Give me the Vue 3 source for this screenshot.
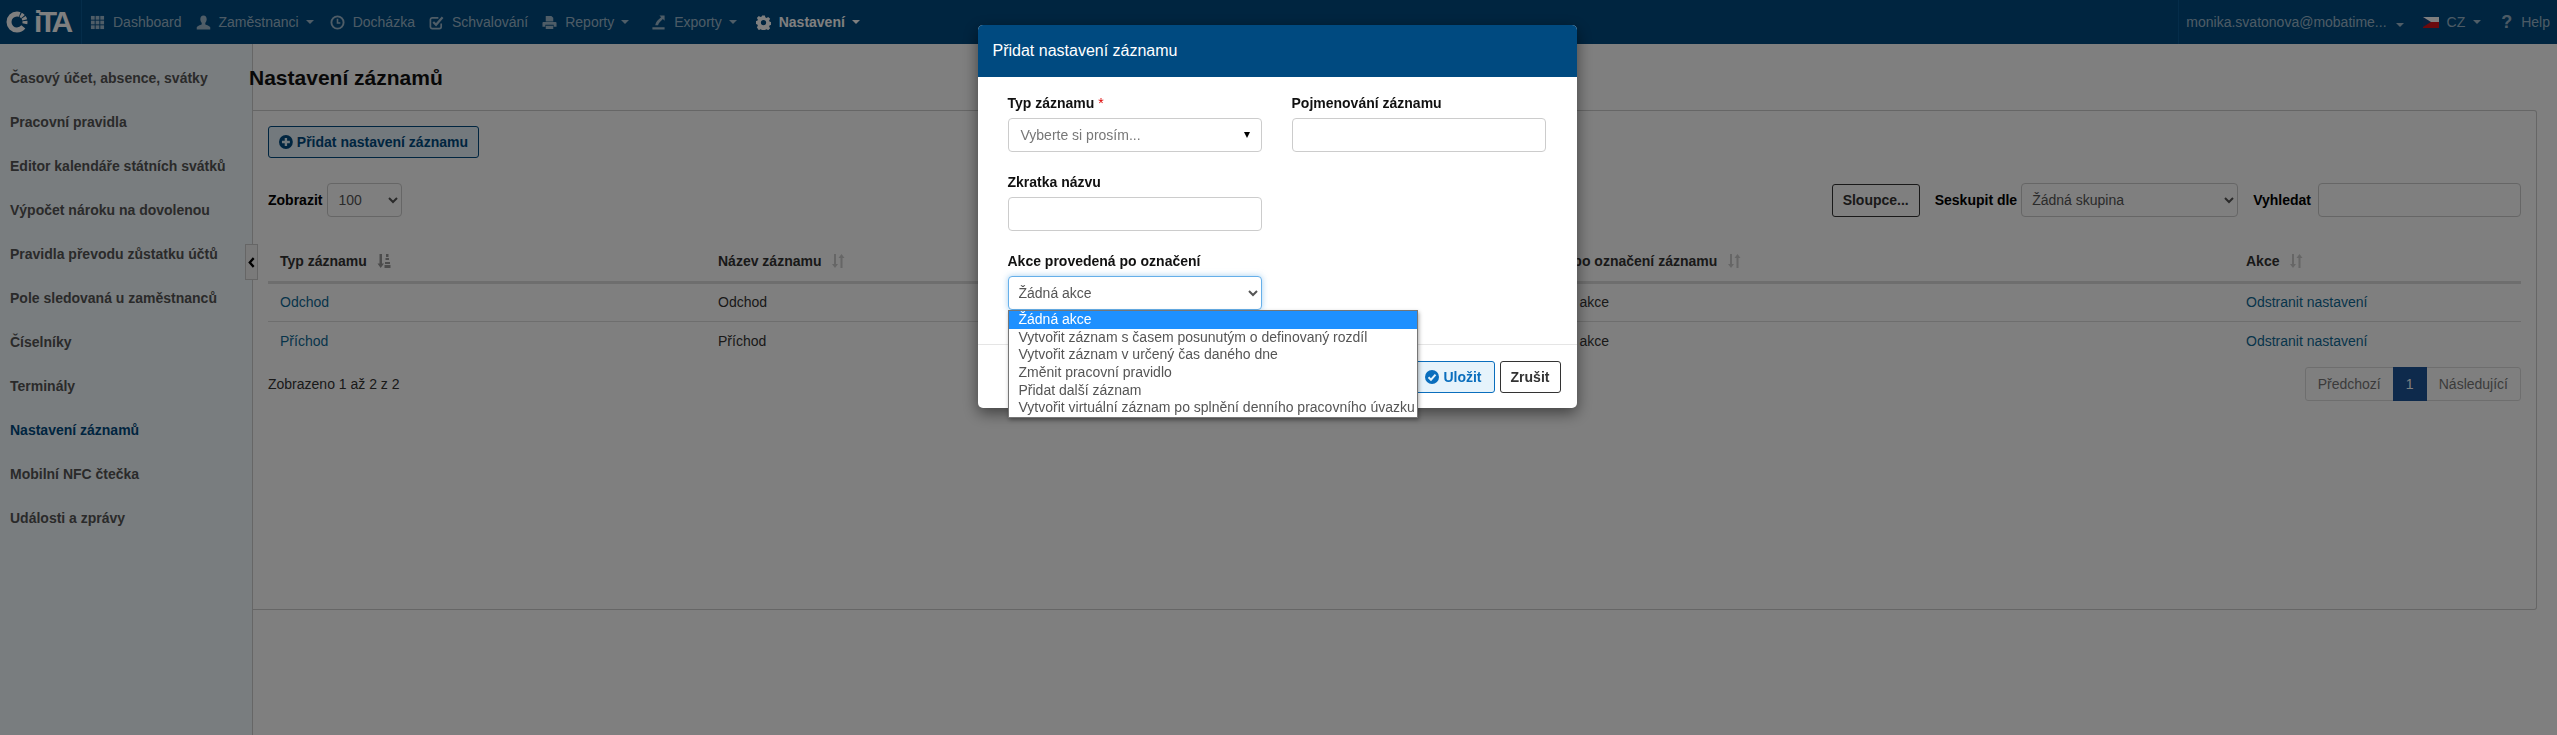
<script setup>
const sideItems = [
  'Časový účet, absence, svátky',
  'Pracovní pravidla',
  'Editor kalendáře státních svátků',
  'Výpočet nároku na dovolenou',
  'Pravidla převodu zůstatku účtů',
  'Pole sledovaná u zaměstnanců',
  'Číselníky',
  'Terminály',
  'Nastavení záznamů',
  'Mobilní NFC čtečka',
  'Události a zprávy'
]

const navItems = [
  { label: 'Dashboard', icon: 'th' },
  { label: 'Zaměstnanci', icon: 'user', caret: true },
  { label: 'Docházka', icon: 'clock' },
  { label: 'Schvalování', icon: 'check' },
  { label: 'Reporty', icon: 'print', caret: true },
  { label: 'Exporty', icon: 'export', caret: true },
  { label: 'Nastavení', icon: 'gear', caret: true, active: true }
]

// třetí sloupec je celý schovaný pod dialogem
const columns = ['Typ záznamu', 'Název záznamu', '', 'Akce po označení záznamu', 'Akce']
const rows = [
  { type: 'Odchod', name: 'Odchod' },
  { type: 'Příchod', name: 'Příchod' }
]

const actions = [
  'Žádná akce',
  'Vytvořit záznam s časem posunutým o definovaný rozdíl',
  'Vytvořit záznam v určený čas daného dne',
  'Změnit pracovní pravidlo',
  'Přidat další záznam',
  'Vytvořit virtuální záznam po splnění denního pracovního úvazku'
]
</script>

<template>
  <div class="page">
    <header class="navbar">
      <div class="logo">
        <svg class="logo-ring" viewBox="0 0 22 22" width="22" height="22">
          <circle cx="11" cy="11" r="8" fill="none" stroke="#fff" stroke-width="5" stroke-dasharray="2.8 1 2.8 1 2.8 1 2.8 3.5 32.7 0" transform="rotate(-90 11 11)" />
        </svg>
        <span class="logo-text">iTA</span>
      </div>
      <nav class="nav-left">
        <a v-for="item in navItems" :key="item.label" class="nav-item" :class="{ active: item.active }">
          <svg class="nav-icon" viewBox="0 0 16 16" width="15" height="15" fill="currentColor">
            <g v-if="item.icon === 'th'">
              <rect x="1" y="1" width="4" height="4" /><rect x="6" y="1" width="4" height="4" /><rect x="11" y="1" width="4" height="4" />
              <rect x="1" y="6" width="4" height="4" /><rect x="6" y="6" width="4" height="4" /><rect x="11" y="6" width="4" height="4" />
              <rect x="1" y="11" width="4" height="4" /><rect x="6" y="11" width="4" height="4" /><rect x="11" y="11" width="4" height="4" />
            </g>
            <path v-else-if="item.icon === 'user'" d="M8 0.5c2.2 0 3.4 1.7 3.4 4 0 1.6-.7 3-1.5 3.8v1.5c0 .6 4.6 1.4 5.3 3.2v2.500H.8V13c.7-1.8 5.3-2.6 5.3-3.2V8.300c-.8-.8-1.500-2.200-1.500-3.800 0-2.300 1.200-4 3.400-4z" />
            <g v-else-if="item.icon === 'clock'" fill="none" stroke="currentColor" stroke-width="2">
              <circle cx="8" cy="8" r="6.500" /><path d="M8 4v4.500h3" stroke-width="1.700" />
            </g>
            <g v-else-if="item.icon === 'check'" fill="none" stroke="currentColor">
              <path d="M13 9v3.500a2 2 0 0 1-2 2H3.500a2 2 0 0 1-2-2V5a2 2 0 0 1 2-2H10" stroke-width="1.800" />
              <path d="M4.500 7.500l3 3L14.500 2.500" stroke-width="2.400" />
            </g>
            <path v-else-if="item.icon === 'print'" d="M4 1h6l2 2v4H4zM1.500 7.500h13a1 1 0 0 1 1 1v4h-3v-2h-9v2h-3v-4a1 1 0 0 1 1-1zM4 11.500h8V15H4z" />
            <path v-else-if="item.icon === 'export'" d="M1.500 13h13v2.500h-13zM9 .5h5.500V6l-1.800-1.800L9.500 7.400c-1 1-1.700 2.200-2 3.600H4.500C5 8.600 6 6.800 7.500 5.300l3.300-3z" />
            <path v-else-if="item.icon === 'gear'" fill-rule="evenodd" d="M6.500.5h3l.4 2 1.400.6 1.700-1.100 2.100 2.100-1.100 1.700.6 1.400 2 .4v3l-2 .4-.6 1.400 1.100 1.700-2.100 2.100-1.700-1.100-1.400.6-.4 2h-3l-.4-2-1.400-.6-1.700 1.100L.9 13.100 2 11.400l-.6-1.400-2-.4v-3l2-.4.6-1.400L.9 3.100 3 1l1.700 1.100 1.400-.6zM8 5.200a2.800 2.800 0 1 0 0 5.600 2.800 2.800 0 0 0 0-5.600z" />
          </svg>
          <span>{{ item.label }}</span>
          <i v-if="item.caret" class="caret"></i>
        </a>
      </nav>
      <div class="nav-right">
        <a class="nav-user">monika.svatonova@mobatime...<i class="caret"></i></a>
        <a class="nav-lang">
          <span class="flag"><span class="flag-tri"></span></span>
          CZ<i class="caret"></i>
        </a>
        <a class="nav-help"><b>?</b>Help</a>
      </div>
    </header>

    <div class="content">
      <aside class="sidebar">
        <a v-for="item in sideItems" :key="item" class="side-item" :class="{ current: item === 'Nastavení záznamů' }">{{ item }}</a>
        <button class="collapse">
          <svg viewBox="0 0 8 12" width="7" height="11"><path d="M6.500 1L2 6l4.500 5" fill="none" stroke="#000" stroke-width="2.600" /></svg>
        </button>
      </aside>

      <main class="main">
        <h1>Nastavení záznamů</h1>
        <section class="card">
          <button class="add-btn">
            <svg viewBox="0 0 14 14" width="14" height="14"><circle cx="7" cy="7" r="7" fill="#004a80" /><path d="M3 7h8M7 3v8" stroke="#e3f2fb" stroke-width="2.400" /></svg>
            Přidat nastavení záznamu
          </button>

          <div class="toolbar">
            <div class="toolbar-left">
              <label>Zobrazit</label>
              <select class="ctl show-select"><option>100</option></select>
            </div>
            <div class="toolbar-right">
              <button class="columns-btn">Sloupce...</button>
              <label class="group-label">Seskupit dle</label>
              <select class="ctl group-select"><option>Žádná skupina</option></select>
              <label class="search-label">Vyhledat</label>
              <input class="ctl search" />
            </div>
          </div>

          <table>
            <colgroup>
              <col class="c1" /><col class="c2" /><col class="c3" /><col class="c4" /><col />
            </colgroup>
            <thead>
              <tr>
                <th v-for="(col, i) in columns" :key="i">
                  {{ col }}
                  <svg v-if="i === 0" class="sort" viewBox="0 0 14 14" width="14" height="14" fill="#999">
                    <path d="M2.500 0h2.500v9.500h2L3.700 14 .5 9.500h2z" />
                    <rect x="9" y="0" width="2.500" height="3" /><rect x="8.500" y="4" width="3.500" height="2" /><rect x="8" y="8" width="5" height="2" /><rect x="7.500" y="11" width="6" height="3" />
                  </svg>
                  <svg v-else-if="col" class="sort faint" viewBox="0 0 14 14" width="14" height="14" fill="#ccc">
                    <path d="M3 0h2v10h2l-3 4-3-4h2zM9.500 4h-2l3-4 3 4h-2v10h-2z" />
                  </svg>
                </th>
              </tr>
            </thead>
            <tbody>
              <tr v-for="row in rows" :key="row.type">
                <td><a class="link">{{ row.type }}</a></td>
                <td>{{ row.name }}</td>
                <td></td>
                <td>Žádná akce</td>
                <td><a class="link">Odstranit nastavení</a></td>
              </tr>
            </tbody>
          </table>

          <div class="table-foot">
            <span>Zobrazeno 1 až 2 z 2</span>
            <div class="pager">
              <a>Předchozí</a>
              <a class="on">1</a>
              <a>Následující</a>
            </div>
          </div>
        </section>
      </main>
    </div>

    <div class="backdrop">
      <div class="modal">
        <div class="modal-head">Přidat nastavení záznamu</div>
        <div class="modal-body">
          <div class="field">
            <label>Typ záznamu <em>*</em></label>
            <div class="fake-select">
              <span>Vyberte si prosím...</span>
              <i></i>
            </div>
          </div>
          <div class="field">
            <label>Pojmenování záznamu</label>
            <input class="ctl" />
          </div>
          <div class="field">
            <label>Zkratka názvu</label>
            <input class="ctl" />
          </div>
          <div></div>
          <div class="field action-field">
            <label>Akce provedená po označení</label>
            <select class="ctl focused"><option>Žádná akce</option></select>
            <ul class="drop">
              <li v-for="(a, i) in actions" :key="a" :class="{ selected: i === 0 }">{{ a }}</li>
            </ul>
          </div>
        </div>
        <div class="modal-foot">
          <button class="save">
            <svg viewBox="0 0 14 14" width="14" height="14"><circle cx="7" cy="7" r="7" fill="#0a6ebd" /><path d="M3.500 7.200l2.500 2.500 4.500-5" fill="none" stroke="#e3f2fb" stroke-width="2" /></svg>
            Uložit
          </button>
          <button class="cancel">Zrušit</button>
        </div>
      </div>
    </div>
  </div>
</template>

<style>
html, body {
  margin: 0;
  background: #fff;
}
</style>

<style scoped>
.page {
  font-family: "Liberation Sans", Arial, sans-serif;
  font-size: 14px;
  color: #333;
  height: 735px;
  display: flex;
  flex-direction: column;
  overflow: hidden;
}

.navbar {
  height: 44px;
  background: #004a80;
  display: flex;
  align-items: center;
  color: rgba(255, 255, 255, 0.62);
  flex-shrink: 0;
}
.logo {
  width: 82px;
  height: 44px;
  box-sizing: border-box;
  border-right: 1px solid #0a5a94;
  display: flex;
  align-items: center;
  padding-left: 6px;
  color: #fff;
}
.logo-text {
  font-size: 30px;
  font-weight: 700;
  letter-spacing: -3.500px;
  margin-left: 6px;
}
.nav-left {
  display: flex;
  align-items: center;
  padding-left: 1px;
}
.nav-item {
  display: flex;
  align-items: center;
  padding: 0 7px;
  white-space: nowrap;
}
.nav-item.active {
  color: #fff;
  font-weight: 700;
}
.nav-icon {
  margin-right: 8px;
}
.caret {
  display: inline-block;
  width: 0;
  height: 0;
  margin: 0 5px 0 7px;
  border-left: 4px solid transparent;
  border-right: 4px solid transparent;
  border-top: 4px solid currentColor;
}
.nav-item:nth-child(2) .caret {
  margin-right: 2px;
}
.nav-item:nth-child(5) .caret {
  margin-right: 8px;
}
.nav-right {
  margin-left: auto;
  height: 44px;
  display: flex;
  align-items: center;
  border-left: 1px solid #0a5a94;
  padding-left: 7px;
  padding-right: 7px;
}
.nav-user {
  white-space: nowrap;
}
.nav-user .caret {
  margin: 0 0 0 9px;
}
.nav-lang {
  display: flex;
  align-items: center;
  margin-left: 19px;
}
.nav-lang .caret {
  margin: 0 0 0 8px;
}
.flag {
  width: 16px;
  height: 11px;
  margin-right: 8px;
  position: relative;
  background: linear-gradient(#fff 50%, #d7141a 50%);
  display: block;
  overflow: hidden;
}
.flag-tri {
  position: absolute;
  left: 0;
  top: 0;
  border-left: 8px solid #11457e;
  border-top: 5.5px solid transparent;
  border-bottom: 5.5px solid transparent;
}
.nav-help {
  margin-left: 20px;
  display: flex;
  align-items: center;
}
.nav-help b {
  font-size: 18px;
  margin-right: 9px;
}

.content {
  flex: 1;
  display: flex;
  min-height: 0;
}
.sidebar {
  width: 253px;
  box-sizing: border-box;
  flex-shrink: 0;
  background: #f3fafe;
  border-right: 1px solid #ccc;
  padding-top: 12px;
  position: relative;
}
.side-item {
  display: flex;
  align-items: center;
  height: 44px;
  padding-left: 10px;
  font-weight: 700;
  color: #555;
  white-space: nowrap;
}
.side-item.current {
  color: #004a80;
}
.collapse {
  position: absolute;
  left: 245px;
  top: 200px;
  width: 13px;
  height: 36px;
  padding: 0;
  box-sizing: border-box;
  background: #f5f5f5;
  border: 1px solid #ccc;
  display: flex;
  align-items: center;
  justify-content: center;
}

.main {
  flex: 1;
  min-width: 0;
  padding-right: 20px;
  position: relative;
}
h1 {
  margin: 22px 0 0 -4px;
  height: 24px;
  line-height: 24px;
  font-size: 21px;
  font-weight: 700;
  color: #111;
  position: relative;
}
.card {
  margin-top: 20px;
  height: 500px;
  box-sizing: border-box;
  border: 1px solid #ccc;
  border-left: none;
  border-radius: 0 3px 3px 0;
  padding: 15px 15px 0 15px;
}
.add-btn {
  height: 32px;
  width: 211px;
  display: flex;
  align-items: center;
  gap: 4px;
  padding: 0 10px;
  font: 700 14px "Liberation Sans", Arial, sans-serif;
  white-space: nowrap;
  color: #004a80;
  background: #e6f2fa;
  border: 1px solid #004a80;
  border-radius: 3px;
}

.toolbar {
  margin-top: 25px;
  display: flex;
  justify-content: space-between;
  align-items: center;
  height: 34px;
}
.toolbar-left,
.toolbar-right {
  display: flex;
  align-items: center;
}
.toolbar label {
  font-weight: 700;
  color: #000;
}
.ctl {
  box-sizing: border-box;
  height: 34px;
  border: 1px solid #ccc;
  border-radius: 4px;
  background: #fff;
  font: 14px "Liberation Sans", Arial, sans-serif;
  color: #555;
  padding: 0 6px;
}
.show-select {
  width: 75px;
  margin-left: 5px;
}
.columns-btn {
  width: 88px;
  height: 33px;
  padding: 0;
  font: 700 14px "Liberation Sans", Arial, sans-serif;
  color: #333;
  background: #fff;
  border: 1px solid #333;
  border-radius: 3px;
}
.group-label {
  margin-left: 15px;
}
.group-select {
  width: 217px;
  margin-left: 4px;
}
.search-label {
  margin-left: 15px;
}
.search {
  width: 203px;
  margin-left: 7px;
}

table {
  margin-top: 26px;
  width: 100%;
  border-collapse: collapse;
  table-layout: fixed;
}
.c1 { width: 438px; }
.c2 { width: 409px; }
.c3 { width: 409px; }
.c4 { width: 710px; }
th {
  height: 39px;
  box-sizing: border-box;
  padding: 0 12px 1px;
  text-align: left;
  font-weight: 700;
  border-bottom: 3px solid #ddd;
  white-space: nowrap;
}
.sort {
  margin-left: 6px;
  vertical-align: -2px;
}
td {
  height: 39px;
  box-sizing: border-box;
  padding: 0 12px;
  border-bottom: 1px solid #ddd;
  color: #333;
  white-space: nowrap;
}
tbody tr:last-child td {
  border-bottom: none;
}
.link {
  color: #0f6a96;
}
.table-foot {
  margin-top: 7px;
  display: flex;
  justify-content: space-between;
  align-items: center;
}
.pager {
  display: flex;
  height: 34px;
  box-sizing: border-box;
  border: 1px solid #ddd;
  border-radius: 3px;
}
.pager a {
  display: flex;
  align-items: center;
  padding: 0 12px;
  color: #777;
}
.pager a.on {
  margin: -1px 0;
  width: 34px;
  box-sizing: border-box;
  justify-content: center;
  padding: 0;
  background: #1d5598;
  color: #fff;
}

.backdrop {
  position: fixed;
  inset: 0;
  background: rgba(0, 0, 0, 0.5);
  display: flex;
  justify-content: center;
  align-items: flex-start;
}
.modal {
  width: 599px;
  margin: 25px 3px 0 0;
  background: #fff;
  border-radius: 5px;
  box-shadow: 0 5px 15px rgba(0, 0, 0, 0.5);
}
.modal-head {
  height: 52px;
  box-sizing: border-box;
  padding: 0 15px;
  display: flex;
  align-items: center;
  background: #004a80;
  color: #fff;
  font-size: 16px;
  border-radius: 5px 5px 0 0;
}
.modal-body {
  height: 268px;
  box-sizing: border-box;
  padding: 16px 30px 0;
  display: grid;
  grid-template-columns: 254px 254px;
  column-gap: 30px;
  grid-auto-rows: 79px;
  border-bottom: 1px solid #e5e5e5;
}
.field {
  display: flex;
  flex-direction: column;
  position: relative;
}
.field label {
  height: 20px;
  line-height: 20px;
  margin-bottom: 5px;
  font-weight: 700;
  color: #111;
}
.field label em {
  color: #d00;
  font-style: normal;
  font-weight: 400;
}
.fake-select {
  height: 34px;
  box-sizing: border-box;
  border: 1px solid #ccc;
  border-radius: 4px;
  padding: 0 12px;
  display: flex;
  align-items: center;
  justify-content: space-between;
  color: #777;
}
.fake-select i {
  border-left: 3.500px solid transparent;
  border-right: 3.500px solid transparent;
  border-top: 6px solid #000;
  margin-right: -1px;
}
.focused {
  border-color: #66afe9;
  box-shadow: 0 0 6px rgba(102, 175, 233, 0.6);
  outline: none;
}
.drop {
  position: absolute;
  left: 0;
  top: 59px;
  width: 410px;
  box-sizing: border-box;
  margin: 0;
  padding: 0;
  list-style: none;
  background: #fff;
  border: 1px solid #767676;
  box-shadow: 1px 2px 4px rgba(0, 0, 0, 0.35);
  z-index: 2;
}
.drop li {
  height: 17.67px;
  line-height: 17px;
  padding-left: 10px;
  color: #555;
  white-space: nowrap;
}
.drop li.selected {
  background: #1e90ff;
  color: #fff;
}
.modal-foot {
  height: 63px;
  box-sizing: border-box;
  padding: 16px 16px 0;
  display: flex;
  justify-content: flex-end;
  gap: 5px;
}
.modal-foot button {
  height: 32px;
  box-sizing: border-box;
  font: 700 14px "Liberation Sans", Arial, sans-serif;
  border-radius: 3px;
}
.save {
  display: flex;
  align-items: center;
  gap: 4px;
  padding: 0 12px;
  color: #0a6ebd;
  background: #e6f3fb;
  border: 1px solid #0a6ebd;
}
.cancel {
  width: 61px;
  padding: 0;
  color: #333;
  background: #fff;
  border: 1px solid #333;
}
</style>
